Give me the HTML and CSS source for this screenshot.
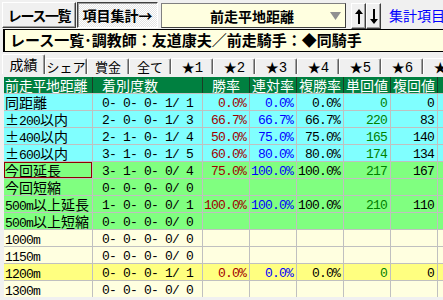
FILE: index.html
```html
<!DOCTYPE html>
<html lang="ja">
<head>
    <meta charset="UTF-8" />
    <title>レース一覧 項目集計</title>
    <link rel="stylesheet" href="styles.css">
</head>
<body>
    <div class="toolbar">
        <div class="btn btn-list">レース一覧</div>
        <div class="btn btn-pressed">項目集計→</div>
        <div class="combo">
            <span class="combo-label">前走平地距離</span>
            <svg class="combo-arrow" width="11" height="8" viewBox="0 0 11 8"><polygon points="0,0 11,0 5.5,8" fill="#909090"/></svg>
        </div>
        <div class="btn btn-arrow btn-up">
            <svg width="8" height="15" viewBox="0 0 8 15"><polygon points="4,0 0,5 3,5 3,15 5,15 5,5 8,5" fill="#000"/></svg>
        </div>
        <div class="btn btn-arrow">
            <svg width="8" height="15" viewBox="0 0 8 15"><polygon points="4,15 0,10 3,10 3,0 5,0 5,10 8,10" fill="#000"/></svg>
        </div>
        <span class="link">集計項目メニュー</span>
    </div>

    <div class="caption">レース一覧･調教師：友道康夫／前走騎手：◆同騎手</div>

    <div class="tabs">
        <div class="tab active">成績</div>
        <div class="tab">シェア</div>
        <div class="tab">賞金</div>
        <div class="tab">全て</div>
        <div class="tab">★<span class="an">1</span></div>
        <div class="tab">★<span class="an">2</span></div>
        <div class="tab">★<span class="an">3</span></div>
        <div class="tab">★<span class="an">4</span></div>
        <div class="tab">★<span class="an">5</span></div>
        <div class="tab">★<span class="an">6</span></div>
        <div class="tab">★<span class="an">7</span></div>
    </div>

    <div class="sheet">
        <div class="row head">
            <div class="name">前走平地距離</div>
            <div class="count">着別度数</div>
            <div>勝率</div>
            <div>連対率</div>
            <div>複勝率</div>
            <div>単回値</div>
            <div>複回値</div>
            <div>単人気</div>
        </div>
        <div class="row cyan">
            <div class="name">同距離</div>
            <div class="count">0- 0- 0- 1/ 1</div>
            <div class="num win">0.0%</div>
            <div class="num ren">0.0%</div>
            <div class="num">0.0%</div>
            <div class="num tan">0</div>
            <div class="num">0</div>
            <div></div>
        </div>
        <div class="row cyan">
            <div class="name">±<span class="an">200</span>以内</div>
            <div class="count">2- 0- 0- 1/ 3</div>
            <div class="num win">66.7%</div>
            <div class="num ren">66.7%</div>
            <div class="num">66.7%</div>
            <div class="num tan">220</div>
            <div class="num">83</div>
            <div></div>
        </div>
        <div class="row cyan">
            <div class="name">±<span class="an">400</span>以内</div>
            <div class="count">2- 1- 0- 1/ 4</div>
            <div class="num win">50.0%</div>
            <div class="num ren">75.0%</div>
            <div class="num">75.0%</div>
            <div class="num tan">165</div>
            <div class="num">140</div>
            <div></div>
        </div>
        <div class="row cyan">
            <div class="name">±<span class="an">600</span>以内</div>
            <div class="count">3- 1- 0- 1/ 5</div>
            <div class="num win">60.0%</div>
            <div class="num ren">80.0%</div>
            <div class="num">80.0%</div>
            <div class="num tan">174</div>
            <div class="num">134</div>
            <div></div>
        </div>
        <div class="row green">
            <div class="name selected">今回延長</div>
            <div class="count">3- 1- 0- 0/ 4</div>
            <div class="num win">75.0%</div>
            <div class="num ren">100.0%</div>
            <div class="num">100.0%</div>
            <div class="num tan">217</div>
            <div class="num">167</div>
            <div></div>
        </div>
        <div class="row green">
            <div class="name">今回短縮</div>
            <div class="count">0- 0- 0- 0/ 0</div>
            <div></div><div></div><div></div><div></div><div></div><div></div>
        </div>
        <div class="row green">
            <div class="name"><span class="an">500m</span>以上延長</div>
            <div class="count">1- 0- 0- 0/ 1</div>
            <div class="num win">100.0%</div>
            <div class="num ren">100.0%</div>
            <div class="num">100.0%</div>
            <div class="num tan">210</div>
            <div class="num">110</div>
            <div></div>
        </div>
        <div class="row green">
            <div class="name"><span class="an">500m</span>以上短縮</div>
            <div class="count">0- 0- 0- 0/ 0</div>
            <div></div><div></div><div></div><div></div><div></div><div></div>
        </div>
        <div class="row pale">
            <div class="name"><span class="an">1000m</span></div>
            <div class="count">0- 0- 0- 0/ 0</div>
            <div></div><div></div><div></div><div></div><div></div><div></div>
        </div>
        <div class="row pale">
            <div class="name"><span class="an">1150m</span></div>
            <div class="count">0- 0- 0- 0/ 0</div>
            <div></div><div></div><div></div><div></div><div></div><div></div>
        </div>
        <div class="row yellow">
            <div class="name"><span class="an">1200m</span></div>
            <div class="count">0- 0- 0- 1/ 1</div>
            <div class="num win">0.0%</div>
            <div class="num ren">0.0%</div>
            <div class="num">0.0%</div>
            <div class="num tan">0</div>
            <div class="num">0</div>
            <div></div>
        </div>
        <div class="row pale">
            <div class="name"><span class="an">1300m</span></div>
            <div class="count">0- 0- 0- 0/ 0</div>
            <div></div><div></div><div></div><div></div><div></div><div></div>
        </div>
    </div>
</body>
</html>
```

FILE: styles.css
```css
html,
body {
    margin: 0;
    overflow: hidden;
}
body {
    width: 443px;
    height: 300px;
    background-color: #f0f0f0;
    font-family: "Noto Sans CJK JP", sans-serif;
    font-size: 14px;
    color: #000;
}
.an {
    font-family: "Liberation Mono", monospace;
    font-size: 13px;
    letter-spacing: -0.8px;
    line-height: 1;
}

/* toolbar */
.toolbar {
    display: flex;
    align-items: flex-start;
    width: 520px;
    height: 29px;
    padding: 2px 0 0 2px;
    box-sizing: border-box;
    white-space: nowrap;
}
.toolbar > * {
    flex: none;
}
.btn {
    height: 26px;
    box-sizing: border-box;
    border: 1px solid;
    border-color: #fff #404040 #404040 #fff;
    box-shadow: inset -1px -1px 0 #a0a0a0;
    background-color: #f0f0f0;
    font-weight: bold;
    line-height: 24px;
    text-align: center;
    overflow: hidden;
}
.btn-list {
    width: 74px;
    margin-right: 1px;
    letter-spacing: -1.4px;
}
.btn-pressed {
    width: 81px;
    border-color: #404040 #fff #fff #404040;
    box-shadow: inset 1px 1px 0 #a0a0a0;
    background: repeating-conic-gradient(#fff 0 25%, #e4e4e4 0 50%) 0 0 / 2px 2px;
}
.combo {
    display: flex;
    align-items: center;
    width: 185px;
    height: 25px;
    margin: 1px 0 0 3px;
    box-sizing: border-box;
    border: 1px solid;
    border-color: #808080 #404040 #404040 #808080;
    background-color: #ffffe0;
    font-weight: bold;
}
.combo-label {
    flex: 1;
    padding-left: 12px;
    text-align: center;
}
.combo-arrow {
    margin-right: 4px;
}
.btn-arrow {
    width: 15px;
    height: 26px;
    margin-top: 1px;
    display: flex;
    align-items: center;
    justify-content: center;
}
.btn-up {
    margin-left: 5px;
}
.link {
    margin-left: 8px;
    color: #0000ff;
    line-height: 26px;
}

/* caption */
.caption {
    width: 470px;
    height: 23px;
    margin-left: 3px;
    padding-left: 5px;
    box-sizing: border-box;
    border: 1px solid #000;
    border-left-width: 2px;
    background-color: #ffffe0;
    font-size: 15px;
    font-weight: bold;
    line-height: 20px;
    white-space: nowrap;
}

/* tabs */
.tabs {
    display: flex;
    align-items: flex-end;
    width: 470px;
    height: 22px;
    padding-left: 2px;
    box-sizing: border-box;
}
.tab {
    flex: none;
    width: 42px;
    height: 16px;
    box-sizing: border-box;
    border: 1px solid #fff;
    border-bottom: none;
    border-right-color: #606060;
    box-shadow: inset -1px 0 0 #a0a0a0;
    border-radius: 2px 2px 0 0;
    font-size: 13px;
    text-align: center;
    line-height: 15px;
    white-space: nowrap;
}
.tab .an {
    font-size: 14px;
}
.tab.active {
    width: 43px;
    height: 20px;
    font-size: 14px;
    line-height: 19px;
}

/* sheet */
.sheet {
    display: flex;
    flex-direction: column;
    gap: 1px;
    width: 470px;
    margin: 3px 0 0 4px;
    background-color: #c0c0c0;
}
.row {
    flex: none;
    display: grid;
    grid-template-columns: 88px 109px 46px 46px 46px 46px 46px 60px;
    grid-template-rows: 16px;
    column-gap: 1px;
    height: 16px;
    line-height: 16px;
}
.row > div {
    height: 16px;
    box-sizing: border-box;
    overflow: hidden;
    white-space: pre;
}
.head {
    background-color: #1c3c24;
}
.head > div {
    background-color: #008040;
    color: #fff;
    text-align: center;
}
.head .name {
    text-align: left;
    padding-left: 1px;
    letter-spacing: -0.3px;
}
.head .count {
    text-align: left;
    padding-top: 0;
    padding-left: 9px;
    font-family: "Noto Sans CJK JP", sans-serif;
    font-size: 14px;
    letter-spacing: 0;
}
.cyan > div {
    background-color: #80ffff;
}
.green > div {
    background-color: #80ff80;
}
.pale > div {
    background-color: #ffffe0;
}
.yellow > div {
    background-color: #ffff80;
}
.name {
    padding-left: 1px;
}
.selected {
    outline: 1px solid #900000;
    outline-offset: -1px;
}
.count,
.num {
    padding-top: 2px;
    font-family: "Liberation Mono", monospace;
    font-size: 13px;
    letter-spacing: -0.8px;
}
.count {
    padding-left: 9px;
}
.num {
    text-align: right;
    padding-right: 3px;
}
.win {
    color: #a00000;
}
.ren {
    color: #0000ff;
}
.tan {
    color: #008000;
}
```
